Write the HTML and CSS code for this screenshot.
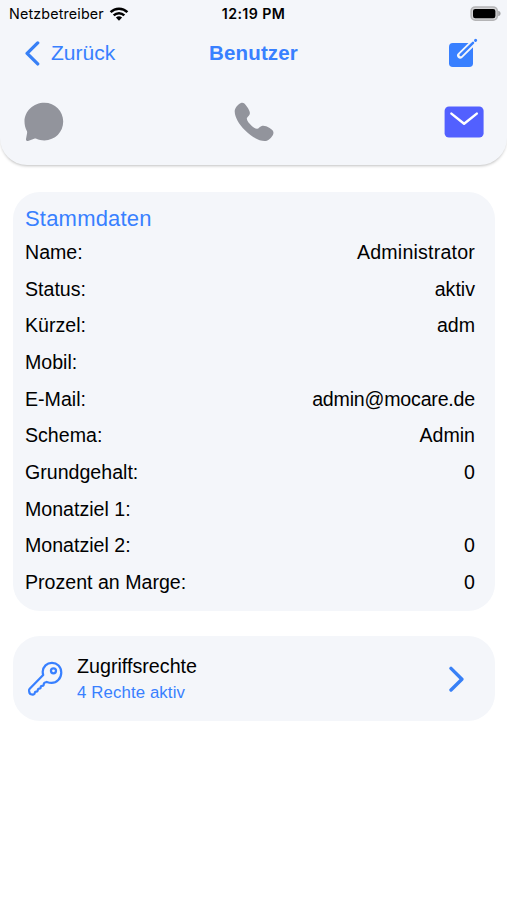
FILE: index.html
```html
<!DOCTYPE html>
<html lang="de">
<head>
    <meta charset="UTF-8">
    <meta name="viewport" content="width=device-width, initial-scale=1.0">
    <title>Benutzer</title>
    <link rel="stylesheet" href="styles.css">
</head>
<body>
    <header class="header">
        <!-- Status bar -->
        <div class="status-bar">
            <div class="carrier">
                <span>Netzbetreiber</span>
                <svg width="20" height="14" viewBox="0 0 20 14" fill="none" stroke="#000" stroke-width="2.5">
                    <path d="M1.6 5.1a12 12 0 0 1 16.8 0"/>
                    <path d="M4.7 8.3a7.6 7.6 0 0 1 10.6 0"/>
                    <path d="M10 13.7 6.9 10.6a4.5 4.5 0 0 1 6.2 0z" fill="#000" stroke="none"/>
                </svg>
            </div>
            <span class="time">12:19 PM</span>
            <svg class="battery" width="32" height="16" viewBox="0 0 32 16">
                <rect x="1.1" y=".9" width="26.2" height="13.4" rx="4.2" fill="#d4d4d6" stroke="#b4b4b6" stroke-width="1.5"/>
                <rect x="3" y="2.9" width="22.4" height="9.4" rx="2.2" fill="#000"/>
                <path d="M28.2 4.8c3.2.8 3.2 4.7 0 5.5z" fill="#a4a4a6"/>
            </svg>
        </div>

        <!-- Navigation -->
        <nav class="nav">
            <a class="back">
                <svg width="15" height="25" viewBox="0 0 15 25" fill="none" stroke="#3880f6" stroke-width="3.3" stroke-linecap="round" stroke-linejoin="round">
                    <path d="M12.7 1.9 2.1 12.4l10.6 10.5"/>
                </svg>
                <span>Zurück</span>
            </a>
            <h1>Benutzer</h1>
            <a class="edit">
                <svg width="30" height="30" viewBox="0 0 30 30" fill="none" stroke-linecap="round">
                    <rect x="1" y="5" width="24" height="24" rx="3.8" fill="#3880ff"/>
                    <path d="M12.2 17.5 27.5 2.5" stroke="#f4f6fa" stroke-width="6.2"/>
                    <path d="M12.7 17 25 4.9" stroke="#3880ff" stroke-width="2.5"/>
                    <path d="m27.5 2.4.2-.2" stroke="#3880ff" stroke-width="2.9"/>
                </svg>
            </a>
        </nav>

        <!-- Contact actions -->
        <div class="actions">
            <svg width="40" height="40" viewBox="0 0 40 40" fill="#92949c">
                <path d="M20.4.8C31 .8 39.2 9 39.2 19.6S31 38.4 20.4 38.4c-3.2 0-5.6-.6-8-1.7-.8-.4-1.5-.3-2.3 0l-5.4 2.1c-1.8.7-2.9.1-2.7-1.7l1.1-6.2c.2-1-.1-1.7-.6-2.6C1.2 25.6.5 22.8.5 19.6.5 9 9.6.8 20.4.8z"/>
            </svg>
            <svg width="40" height="40" viewBox="0 0 40 40" fill="#92949c">
                <path d="M30.7 39.1c-5.5 0-13.3-4.2-19.7-10.8C4.8 22 .9 15.1.7 9.4.6 5.9 4.2 2 7 .9c2.3-.8 4 .6 6.2 4.1 2.2 3.4 3.2 5.5 2.4 7.4-.9 2.1-2.8 2.6-2.8 4.2 0 2 2.4 5.2 5 7.4 2.3 1.9 3.9 2.9 5.3 2.8 1.8-.1 2.4-2.4 4.6-2.9 2.3-.5 4.7.1 7.9 2.1 3.5 2.2 4.5 3.9 3.5 6.4-1 2.5-4.7 6.7-8.4 6.7z"/>
            </svg>
            <svg width="40" height="32" viewBox="0 0 40 32" fill="none">
                <rect x=".6" y=".4" width="39" height="31.2" rx="4.4" fill="#5260ff"/>
                <path d="m7.4 7.6 12.7 10.2L32.8 7.6" stroke="#fff" stroke-width="2.5" stroke-linecap="round" stroke-linejoin="round"/>
            </svg>
        </div>
    </header>

    <main class="content">
        <section class="card">
            <h2>Stammdaten</h2>
            <dl>
                <div class="row"><dt>Name:</dt><dd class="name">Administrator</dd></div>
                <div class="row"><dt>Status:</dt><dd>aktiv</dd></div>
                <div class="row"><dt>Kürzel:</dt><dd>adm</dd></div>
                <div class="row"><dt>Mobil:</dt><dd></dd></div>
                <div class="row"><dt>E-Mail:</dt><dd class="email">admin@mocare.de</dd></div>
                <div class="row"><dt>Schema:</dt><dd>Admin</dd></div>
                <div class="row"><dt>Grundgehalt:</dt><dd>0</dd></div>
                <div class="row"><dt>Monatziel 1:</dt><dd></dd></div>
                <div class="row"><dt>Monatziel 2:</dt><dd>0</dd></div>
                <div class="row"><dt>Prozent an Marge:</dt><dd>0</dd></div>
            </dl>
        </section>

        <section class="card rights">
            <svg width="35" height="36" viewBox="0 0 36 36" fill="none" stroke="#3880ff" stroke-width="2.3" stroke-linecap="round" stroke-linejoin="round">
                <path d="M31.4 4.2c-3.7-3.7-9.8-3.7-13.4-.2-2.7 2.7-3.4 6.3-2.4 9.8L2 27.7c-.8.8-1 1.4-.9 2.3l.4 2.3c.2.7.6 1.1 1.3 1.3l2.1.4c.7.1 1.3-.1 1.6-.6.6-.8.5-1.5.9-2 .5-.6 1.7-.3 2.2-.8.6-.6.3-1.7.9-2.3.6-.5 1.6-.1 2.2-.7.5-.6.1-1.7.8-2.3.6-.5 1.7-.1 2.3-.7.6-.6.2-1.6.8-2.4.8-1 1.8-.7 2.7-1.2 4 1.6 8.8 1.2 11.8-1.9 4.1-4 4.1-11.1.3-14.9z"/>
                <circle cx="26.2" cy="9.6" r="2.6"/>
            </svg>
            <div class="rights-text">
                <h3>Zugriffsrechte</h3>
                <p>4 Rechte aktiv</p>
            </div>
            <svg width="17" height="26" viewBox="0 0 17 26" fill="none" stroke="#3880f6" stroke-width="3.4" stroke-linecap="round" stroke-linejoin="round">
                <path d="m3 2.4 10.9 10.8L3 24"/>
            </svg>
        </section>
    </main>
</body>
</html>
```
FILE: styles.css
```css
* {
    box-sizing: border-box;
}

body {
    margin: 0;
    height: 900px;
    background: #fff;
    color: #000;
    font-family: 'Liberation Sans', Arial, sans-serif;
}

svg {
    display: block;
    flex-shrink: 0;
}

h1, h2, h3, p, dl, dt, dd {
    margin: 0;
}

.header {
    height: 165px;
    background: #f4f6fa;
    border-radius: 0 0 27px 27px;
    box-shadow: 0 2px 3px -1px rgba(0, 0, 0, 0.25);
}

/* Status bar */
.status-bar {
    display: grid;
    grid-template-columns: 1fr auto 1fr;
    align-items: center;
    height: 27px;
    padding: 0 5px 0 9px;
    font-family: Inter, sans-serif;
    font-size: 14.3px;
}

.carrier {
    display: flex;
    align-items: center;
    gap: 5px;
    letter-spacing: 0.15px;
}

.time {
    margin-right: 4px;
    font-size: 14.2px;
    font-weight: 600;
    letter-spacing: 0.4px;
}

.battery {
    justify-self: end;
}

/* Navigation */
.nav {
    display: grid;
    grid-template-columns: 1fr auto 1fr;
    align-items: center;
    height: 52px;
    padding: 0 28px 0 25px;
    color: #3880ff;
}

.back {
    display: flex;
    align-items: center;
    gap: 11px;
    font-size: 21px;
}

.nav h1 {
    margin-left: 3px;
    font-size: 20.5px;
    letter-spacing: 0.15px;
}

.edit {
    justify-self: end;
    margin-right: 1.5px;
}

.actions {
    display: flex;
    justify-content: space-between;
    align-items: center;
    height: 86px;
    padding: 0 23px 0 24px;
}

/* Cards */
.content {
    padding: 27px 12px 0 13px;
}

.card {
    height: 419px;
    padding: 12px 20px 0 12px;
    background: #f4f6fa;
    border-radius: 27px;
}

.card h2 {
    height: 30px;
    color: #3880ff;
    font-size: 22px;
    font-weight: 400;
    letter-spacing: 0.2px;
    line-height: 29px;
}

.row {
    display: flex;
    justify-content: space-between;
    height: 36.67px;
    font-size: 19.6px;
    line-height: 37px;
}

.name {
    letter-spacing: 0.2px;
}

.email {
    letter-spacing: -0.2px;
}

.rights {
    display: flex;
    align-items: center;
    height: 85px;
    margin-top: 25px;
    padding: 1px 30.5px 0 15px;
}

.rights-text {
    flex: 1;
    margin-left: 14px;
}

.rights h3 {
    font-size: 19.7px;
    font-weight: 400;
    line-height: 27px;
}

.rights p {
    color: #3880ff;
    font-size: 16.8px;
    letter-spacing: 0.12px;
    line-height: 26px;
}
```
